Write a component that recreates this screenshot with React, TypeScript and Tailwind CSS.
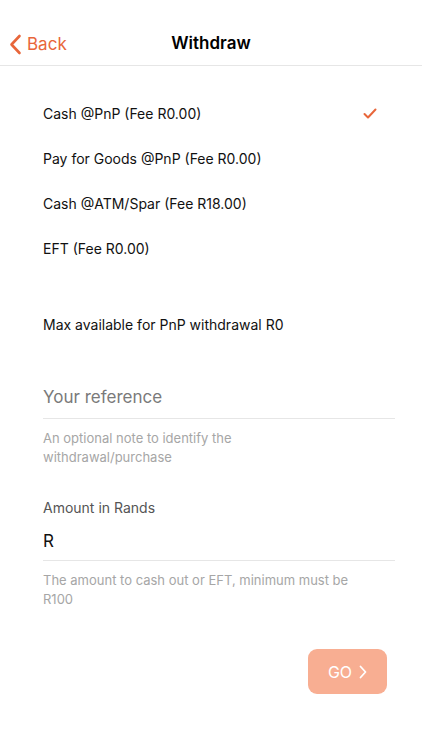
import { useState } from 'react'

const options = [
  'Cash @PnP (Fee R0.00)',
  'Pay for Goods @PnP (Fee R0.00)',
  'Cash @ATM/Spar (Fee R18.00)',
  'EFT (Fee R0.00)',
]

export default function App() {
  const [selected, setSelected] = useState(0)

  return (
    <div className="w-[422px] h-[750px] bg-white text-black" style={{ fontFamily: 'Inter, "Noto Sans", sans-serif' }}>
      {/* Header */}
      <div className="relative h-[66px] pt-[20px] border-b border-[#e6e6e6]">
        <div className="h-[45px] flex items-center justify-center">
          <button className="absolute left-[9px] top-[33px] flex items-center gap-[5px] text-[#e8663a]">
            <svg width="13" height="21" viewBox="0 0 13 21" fill="none">
              <path d="M10.5 2L2.5 10.5L10.5 19" stroke="#e8663a" strokeWidth="2.6" strokeLinecap="round" strokeLinejoin="round" />
            </svg>
            <span className="text-[17px] leading-[22px]">Back</span>
          </button>
          <h1 className="text-[17px] font-semibold leading-[22px]">Withdraw</h1>
        </div>
      </div>

      {/* Options */}
      <div className="pt-[25px] px-[43px]">
        {options.map((o, i) => (
          <div key={o} onClick={() => setSelected(i)} className="h-[45px] flex items-center justify-between cursor-pointer">
            <span className="text-[14px] text-[#111]">{o}</span>
            {selected === i && (
              <svg width="14" height="11" viewBox="0 0 14 11" fill="none" className="mr-[2px]">
                <path d="M1.5 6L5 9.5L12.5 1.5" stroke="#e8663a" strokeWidth="2" strokeLinecap="round" strokeLinejoin="round" />
              </svg>
            )}
          </div>
        ))}
      </div>

      <div className="px-[43px]">
        <p className="mt-[43px] text-[14px] leading-[22px] text-[#111]">Max available for PnP withdrawal R0</p>

        {/* Reference field */}
        <div className="mt-[40px] mr-[-16px] border-b border-[#e6e6e6] h-[43px] pt-[1px] flex items-center">
          <span className="text-[17px] text-[#7a7a7a]">Your reference</span>
        </div>
        <p className="mt-[10px] text-[13px] leading-[19px] text-[#a6a6a6] w-[250px]">
          An optional note to identify the withdrawal/purchase
        </p>

        {/* Amount field */}
        <p className="mt-[31px] text-[14px] leading-[20px] text-[#555]">Amount in Rands</p>
        <div className="mr-[-16px] border-b border-[#e6e6e6] h-[43px] pt-[6px] flex items-center">
          <span className="text-[17px] text-[#111]">R</span>
        </div>
        <p className="mt-[10px] text-[13px] leading-[19px] text-[#a6a6a6] w-[330px]">
          The amount to cash out or EFT, minimum must be R100
        </p>
      </div>

      <div className="flex justify-end pr-[35px] mt-[40px]">
        <button className="w-[79px] h-[45px] rounded-[9px] bg-[#f8ae92] flex items-center justify-center gap-[7px] text-white">
          <span className="text-[16px]">GO</span>
          <svg width="8" height="14" viewBox="0 0 8 14" fill="none">
            <path d="M1.5 1.5L6.5 7L1.5 12.5" stroke="white" strokeWidth="1.8" strokeLinecap="round" strokeLinejoin="round" />
          </svg>
        </button>
      </div>
    </div>
  )
}
